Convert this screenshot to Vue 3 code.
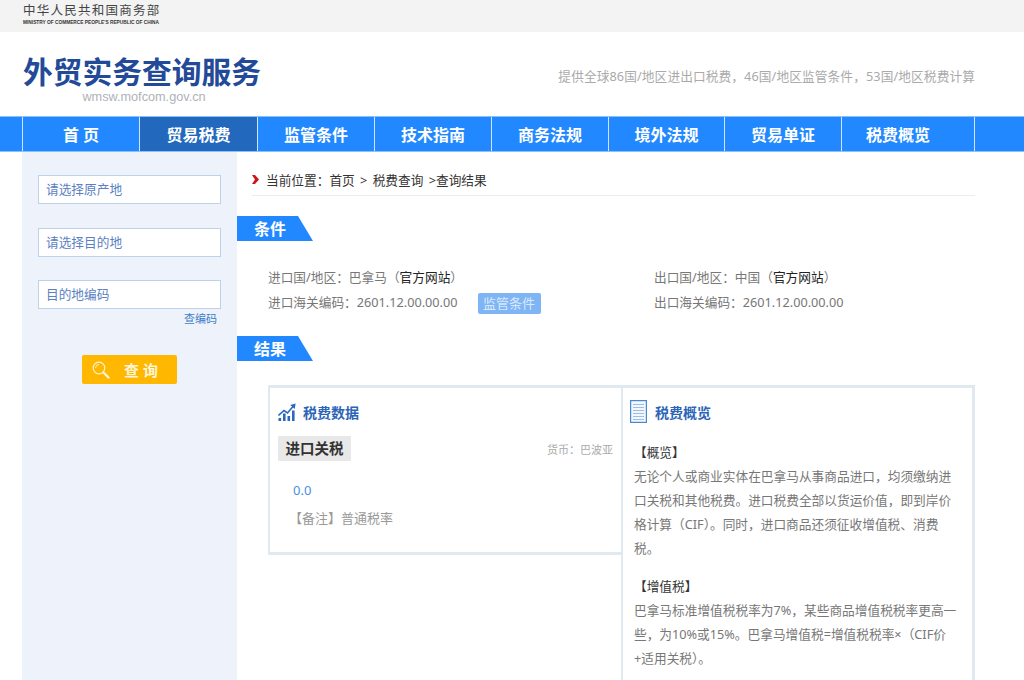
<template>
  <div class="page">
    <div class="top-bar">
      <div class="gov-logo">
        <div class="gov-cn">中华人民共和国商务部</div>
        <div class="gov-en">MINISTRY OF COMMERCE PEOPLE'S REPUBLIC OF CHINA</div>
      </div>
    </div>

    <header class="header">
      <div class="brand">
        <div class="brand-title">外贸实务查询服务</div>
        <div class="brand-url">wmsw.mofcom.gov.cn</div>
      </div>
      <div class="slogan">提供全球86国/地区进出口税费，46国/地区监管条件，53国/地区税费计算</div>
    </header>

    <nav class="nav">
      <ul class="nav-list">
        <li v-for="item in navItems" :key="item" class="nav-item" :class="{ active: item === '贸易税费' }">{{ item }}</li>
      </ul>
    </nav>

    <div class="body">
      <aside class="sidebar">
        <div class="field">请选择原产地</div>
        <div class="field">请选择目的地</div>
        <div class="field code-field">目的地编码</div>
        <a class="code-link">查编码</a>
        <button class="search-btn" type="button">
          <svg class="search-icon" viewBox="0 0 18 18" width="18" height="18">
            <circle cx="7" cy="7" r="5.8" fill="none" stroke="#fff3cf" stroke-width="1.2" />
            <path d="M3.6 7a3.4 3.4 0 0 1 3.4-3.4" fill="none" stroke="#fff3cf" stroke-width="1" />
            <path d="M11.4 11.4 16.6 16.6" stroke="#fff3cf" stroke-width="2.2" stroke-linecap="round" />
          </svg>
          <span>查询</span>
        </button>
      </aside>

      <main class="main">
        <div class="crumb">
          <svg class="crumb-arrow" viewBox="0 0 7 9" width="7" height="9">
            <path d="M0 0 3 0 7 4.5 3 9 0 9 3 4.5Z" fill="#d0121b" />
          </svg>
          <span>当前位置：首页 &gt; 税费查询 &gt;查询结果</span>
        </div>

        <div class="section-tag">条件</div>
        <div class="cond">
          <div class="cond-row">
            <span>进口国/地区：巴拿马（<b class="site">官方网站</b>）</span>
            <span>出口国/地区：中国（<b class="site">官方网站</b>）</span>
          </div>
          <div class="cond-row">
            <span class="code-line">进口海关编码：2601.12.00.00.00<span class="rule-btn">监管条件</span></span>
            <span>出口海关编码：2601.12.00.00.00</span>
          </div>
        </div>

        <div class="section-tag">结果</div>
        <div class="panels">
          <section class="panel panel-data">
            <h3 class="panel-title">
              <svg class="title-icon" viewBox="0 0 18 18" width="18" height="18">
                <path d="M0.5 12.5 6 7.5 9.5 10 15 3.5" fill="none" stroke="#2c69bd" stroke-width="1.6" />
                <path d="M12.2 2 17.6 0.4 16.8 6Z" fill="#2c69bd" />
                <path d="M0.5 18v-3h2.6v3ZM5 18v-7.5h2.6V18ZM9.5 18v-5h2.6v5ZM14 18V7.5h2.6V18Z" fill="#2c69bd" />
              </svg>
              税费数据
            </h3>
            <div class="tax-head">
              <span class="tax-tag">进口关税</span>
              <span class="currency">货币：巴波亚</span>
            </div>
            <div class="rate">0.0</div>
            <div class="note">【备注】普通税率</div>
          </section>

          <section class="panel panel-summary">
            <h3 class="panel-title">
              <svg class="title-icon doc" viewBox="0 0 17 23" width="17" height="23">
                <rect x="0.6" y="0.6" width="15.8" height="21.8" fill="#f2f7fd" stroke="#4c88d0" stroke-width="1.2" />
                <path d="M3 4.5h11M3 7.5h11M3 10.5h11M3 13.5h11M3 16.5h11M3 19.5h11" stroke="#9dbfe6" stroke-width="1" />
              </svg>
              税费概览
            </h3>
            <div v-for="block in summary" :key="block.title" class="block">
              <div class="block-title">{{ block.title }}</div>
              <p class="block-text">{{ block.text }}</p>
            </div>
          </section>
        </div>
      </main>
    </div>
  </div>
</template>

<script setup>
const navItems = ['首 页', '贸易税费', '监管条件', '技术指南', '商务法规', '境外法规', '贸易单证', '税费概览']

const summary = [
  {
    title: '【概览】',
    text: '无论个人或商业实体在巴拿马从事商品进口，均须缴纳进口关税和其他税费。进口税费全部以货运价值，即到岸价格计算（CIF）。同时，进口商品还须征收增值税、消费税。',
  },
  {
    title: '【增值税】',
    text: '巴拿马标准增值税税率为7%，某些商品增值税税率更高一些，为10%或15%。巴拿马增值税=增值税税率×（CIF价+适用关税）。',
  },
]
</script>

<style>
html,
body {
  margin: 0;
  background: #fff;
  overflow: hidden;
}
</style>

<style scoped>
.page {
  width: 1024px;
  height: 680px;
  overflow: hidden;
  font-family: "Noto Sans", "Noto Sans CJK SC", sans-serif;
  font-size: 12.7px;
  color: #777;
}

.top-bar {
  height: 32px;
  padding-left: 23px;
  background: #f3f3f3;
  box-sizing: border-box;
}

.gov-logo {
  width: 140px;
  padding-top: 4px;
}

.gov-cn {
  font-size: 12.5px;
  line-height: 14px;
  letter-spacing: 1.25px;
  color: #444;
  white-space: nowrap;
}

.gov-en {
  font-family: "Liberation Sans", sans-serif;
  font-size: 4.8px;
  line-height: 7px;
  font-weight: 700;
  color: #333;
  white-space: nowrap;
  margin-top: 1px;
}

.header {
  height: 84px;
  display: flex;
  justify-content: space-between;
  padding: 0 49px 0 23px;
}

.brand {
  padding-top: 22px;
  width: 238px;
}

.brand-title {
  font-size: 29.75px;
  line-height: 36px;
  font-weight: 700;
  color: #224a98;
  white-space: nowrap;
}

.brand-url {
  font-family: "Liberation Sans", sans-serif;
  font-size: 12.7px;
  line-height: 15px;
  color: #aeb2b8;
  text-align: center;
  margin-left: 4px;
}

.slogan {
  padding-top: 35px;
  line-height: 18px;
  letter-spacing: 0.1px;
  color: #aaa;
}

.nav {
  height: 36px;
  padding-left: 22px;
  background: #2288ff;
  border-top: 1px solid #8cc0fb;
  border-bottom: 1px solid #8cc0fb;
  box-sizing: border-box;
}

.nav-list {
  display: flex;
  list-style: none;
  margin: 0;
  padding: 0;
  height: 100%;
}

.nav-item {
  width: 117px;
  flex: none;
  box-sizing: border-box;
  border-left: 1px solid #cfe4ff;
  text-align: center;
  line-height: 36px;
  font-size: 16px;
  font-weight: 700;
  color: #fff;
}

.nav-item:nth-child(2) {
  width: 118px;
}

.nav-item:nth-child(6) {
  width: 116px;
}

.nav-item.active {
  background: #2268bd;
}

.nav-item:last-child {
  width: 134px;
  padding-right: 20px;
  border-right: 1px solid #cfe4ff;
}

.body {
  display: flex;
  margin-left: 22px;
}

.sidebar {
  width: 215px;
  height: 528px;
  flex: none;
  padding: 23px 16px 0;
  box-sizing: border-box;
  background: #edf2fb;
  display: flex;
  flex-direction: column;
}

.field {
  width: 183px;
  height: 29px;
  box-sizing: border-box;
  border: 1px solid #bcd2e8;
  background: #fff;
  padding-left: 7px;
  line-height: 27px;
  color: #5a7fc4;
  margin-bottom: 24px;
}

.field:nth-child(2) {
  margin-bottom: 23px;
}

.code-field {
  margin-bottom: 0;
}

.code-link {
  align-self: flex-end;
  margin-right: 4px;
  font-size: 11px;
  line-height: 20px;
  color: #3f7fc6;
}

.search-btn {
  align-self: flex-start;
  margin: 26px 0 0 44px;
  width: 95px;
  height: 29px;
  border: 0;
  border-radius: 2px;
  background: #ffb700;
  padding: 0 0 0 10px;
  display: flex;
  align-items: center;
  font-family: inherit;
  font-size: 15px;
  font-weight: 700;
  letter-spacing: 4px;
  color: #fff5d8;
}

.search-icon {
  flex: none;
  margin-right: 14px;
}

.main {
  width: 738px;
  flex: none;
}

.crumb {
  display: flex;
  align-items: center;
  height: 44px;
  margin-left: 15px;
  padding-top: 12px;
  border-bottom: 1px solid #ececec;
  box-sizing: border-box;
  word-spacing: 2px;
  color: #333;
}

.crumb-arrow {
  margin-right: 7px;
}

.section-tag {
  width: 76px;
  height: 25px;
  margin-top: 20px;
  padding-left: 17px;
  box-sizing: border-box;
  background: #2288ff;
  clip-path: polygon(0 0, 61px 0, 100% 100%, 0 100%);
  font-size: 16px;
  line-height: 26px;
  font-weight: 700;
  color: #fff;
}

.cond {
  padding: 24px 0 1px 31px;
}

.cond-row {
  display: grid;
  grid-template-columns: 386px 1fr;
  height: 25px;
  line-height: 25px;
}

.site {
  font-weight: 400;
  color: #222;
}

.rule-btn {
  display: inline-block;
  width: 63px;
  height: 21px;
  margin-left: 20px;
  border-radius: 2px;
  background: #7fb5f5;
  color: #d9eafe;
  font-size: 13px;
  line-height: 21px;
  text-align: center;
  vertical-align: -1px;
}

.panels {
  display: grid;
  grid-template-columns: 353px 354px;
  align-items: start;
  margin: 24px 0 0 31px;
}

.panel {
  box-sizing: border-box;
  border-top: 3px solid #e1e9f0;
}

.panel-data {
  height: 170px;
  padding: 0 8px;
  border-left: 2px solid #e1e9f0;
  border-bottom: 3px solid #e1e9f0;
}

.panel-summary {
  height: 300px;
  padding: 0 16px 0 7px;
  border-left: 2px solid #e1e9f0;
  border-right: 3px solid #e1e9f0;
}

.panel-title {
  display: flex;
  align-items: center;
  gap: 7px;
  height: 23px;
  margin: 12px 0 0;
  font-size: 14px;
  font-weight: 700;
  color: #2c64b8;
}

.title-icon.doc {
  margin-right: 1px;
}

.tax-head {
  display: flex;
  justify-content: space-between;
  align-items: center;
  margin-top: 13px;
}

.tax-tag {
  width: 73px;
  height: 25px;
  border-radius: 1px;
  background: #e8e8e8;
  text-align: center;
  font-size: 14.5px;
  font-weight: 700;
  line-height: 25px;
  color: #333;
}

.currency {
  font-size: 11px;
  color: #aaa;
}

.rate {
  margin: 19px 0 0 15px;
  font-size: 13px;
  line-height: 20px;
  color: #4a90e2;
}

.note {
  margin: 8px 0 0 11px;
  font-size: 13px;
  line-height: 20px;
  color: #999;
}

.block {
  margin-left: 4px;
  width: 326px;
}

.block:first-of-type {
  margin-top: 17px;
}

.block + .block {
  margin-top: 14px;
}

.block-title {
  line-height: 24px;
  color: #333;
}

.block-text {
  margin: 0;
  line-height: 24px;
}
</style>
